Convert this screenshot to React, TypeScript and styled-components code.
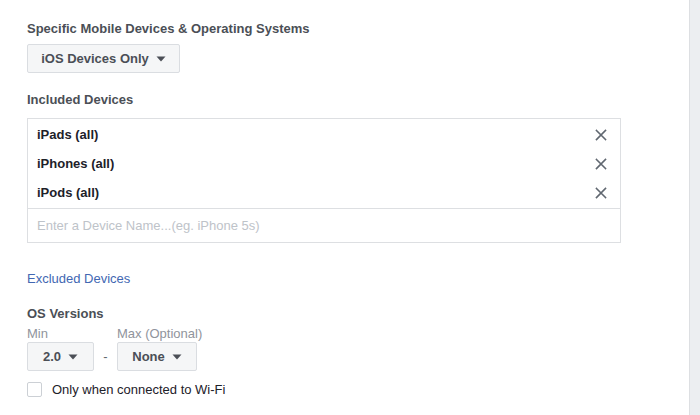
import React from "react";
import styled, { createGlobalStyle } from "styled-components";

const Global = createGlobalStyle`
  html, body { margin: 0; padding: 0; background: #fff; }
  body { font-family: "Liberation Sans", Arial, sans-serif; -webkit-font-smoothing: antialiased; }
`;

const Page = styled.div`
  display: flex;
  width: 700px;
  height: 415px;
  overflow: hidden;
`;

const Main = styled.div`
  flex: 1;
  padding: 21px 0 0 27px;
  display: flex;
  flex-direction: column;
  align-items: flex-start;
`;

const SideBar = styled.div`
  width: 10px;
  background: #eceef1;
  border-left: 1px solid #dddfe2;
`;

const Label = styled.div<{ $mt?: number }>`
  font-size: 13px;
  line-height: 16px;
  font-weight: bold;
  color: #4b4f56;
  margin-top: ${(p) => p.$mt ?? 0}px;
`;

const SelectButton = styled.button<{ $w: number; $mt?: number }>`
  box-sizing: border-box;
  width: ${(p) => p.$w}px;
  height: 29px;
  margin-top: ${(p) => p.$mt ?? 0}px;
  display: flex;
  align-items: center;
  justify-content: center;
  gap: 7px;
  background: #f5f6f7;
  border: 1px solid #dadde1;
  border-radius: 2px;
  font-family: inherit;
  font-size: 13px;
  font-weight: bold;
  color: #4b4f56;
  padding: 0;
`;

const Caret = () => (
  <svg width="10" height="6" viewBox="0 0 10 6">
    <path d="M0.5 0.5 L9.5 0.5 L5 5.5 Z" fill="#4b4f56" />
  </svg>
);

const DeviceBox = styled.div`
  box-sizing: border-box;
  width: 594px;
  margin-top: 10px;
  border: 1px solid #dddfe2;
  display: flex;
  flex-direction: column;
`;

const DeviceList = styled.div`
  padding: 1px 0 1px;
  border-bottom: 1px solid #dddfe2;
`;

const DeviceRow = styled.div`
  height: 29px;
  display: flex;
  align-items: center;
  justify-content: space-between;
  padding: 0 13px 0 9px;
  font-size: 13px;
  font-weight: bold;
  color: #1d2129;
`;

const CloseIcon = () => (
  <svg width="12" height="12" viewBox="0 0 12 12">
    <path d="M1.5 1.5 L10.5 10.5 M10.5 1.5 L1.5 10.5" stroke="#606770" strokeWidth="1.6" strokeLinecap="square" />
  </svg>
);

const DeviceInput = styled.div`
  height: 33px;
  display: flex;
  align-items: center;
  padding-left: 9px;
  font-size: 13px;
  color: #bec3c9;
`;

const Link = styled.a`
  margin-top: 28px;
  font-size: 13px;
  line-height: 16px;
  color: #4267b2;
  text-decoration: none;
`;

const SubLabel = styled.div`
  font-size: 13px;
  line-height: 16px;
  color: #90949c;
  white-space: nowrap;
`;

const VersionGrid = styled.div`
  margin-top: 4px;
  display: grid;
  grid-template-columns: 67px 23px 80px;
  align-items: center;
`;

const Dash = styled.div`
  text-align: center;
  font-size: 13px;
  color: #606770;
`;

const CheckRow = styled.label`
  margin-top: 11px;
  display: flex;
  align-items: center;
  gap: 10px;
  font-size: 13px;
  line-height: 15px;
  color: #1d2129;
`;

const CheckBox = styled.span`
  box-sizing: border-box;
  width: 15px;
  height: 15px;
  border: 1px solid #ccd0d5;
  border-radius: 2px;
  background: #fff;
`;

export default function App() {
  return (
    <>
      <Global />
      <Page>
        <Main>
          <Label>Specific Mobile Devices &amp; Operating Systems</Label>
          <SelectButton $w={153} $mt={7}>
            iOS Devices Only <Caret />
          </SelectButton>
          <Label $mt={19}>Included Devices</Label>
          <DeviceBox>
            <DeviceList>
              {["iPads (all)", "iPhones (all)", "iPods (all)"].map((d) => (
                <DeviceRow key={d}>
                  {d}
                  <CloseIcon />
                </DeviceRow>
              ))}
            </DeviceList>
            <DeviceInput>Enter a Device Name...(eg. iPhone 5s)</DeviceInput>
          </DeviceBox>
          <Link>Excluded Devices</Link>
          <Label $mt={19}>OS Versions</Label>
          <VersionGrid>
            <SubLabel>Min</SubLabel>
            <span />
            <SubLabel>Max (Optional)</SubLabel>
            <SelectButton $w={67}>
              2.0 <Caret />
            </SelectButton>
            <Dash>-</Dash>
            <SelectButton $w={80}>
              None <Caret />
            </SelectButton>
          </VersionGrid>
          <CheckRow>
            <CheckBox />
            Only when connected to Wi-Fi
          </CheckRow>
        </Main>
        <SideBar />
      </Page>
    </>
  );
}
